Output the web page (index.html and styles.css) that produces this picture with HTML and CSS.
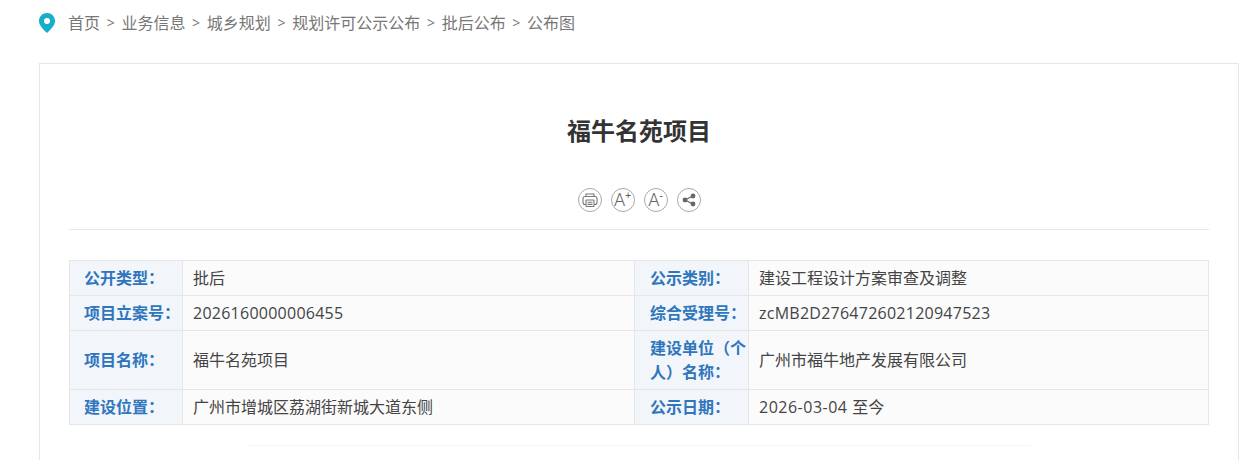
FILE: index.html
```html
<!DOCTYPE html>
<html lang="zh-CN">
<head>
<meta charset="utf-8">
<title>福牛名苑项目</title>
<link rel="stylesheet" href="styles.css">
</head>
<body>
<nav class="crumbs">
  <svg class="pin" width="16" height="20" viewBox="0 0 16 20"><path fill="#16aec9" fill-rule="evenodd" d="M8 0C3.6 0 0 3.5 0 7.900 0 12.600 4.700 16.800 8 20c3.300-3.200 8-7.400 8-12.100C16 3.500 12.400 0 8 0zm0 5a3 3 0 1 1 0 6 3 3 0 0 1 0-6z"/></svg>
  <a>首页</a><span class="sep">&gt;</span><a>业务信息</a><span class="sep">&gt;</span><a>城乡规划</a><span class="sep">&gt;</span><a>规划许可公示公布</a><span class="sep">&gt;</span><a>批后公布</a><span class="sep">&gt;</span><a>公布图</a>
</nav>
<main class="panel">
  <h1 class="title">福牛名苑项目</h1>
  <div class="tools">
    <span class="tool"><svg class="print" width="22" height="22" viewBox="0 0 22 22" fill="none" stroke="#777" stroke-width="1.100"><path d="M7 7.500V5h8v2.500"/><rect x="4" y="7.500" width="14" height="8" rx="2"/><rect x="7" y="11" width="8" height="6.500" rx="0.500" fill="#fff"/><path d="M8.500 13.200h5M8.500 15.400h5"/></svg></span>
    <span class="tool"><span class="glyph">A</span><span class="mark">+</span></span>
    <span class="tool"><span class="glyph">A</span><span class="mark">-</span></span>
    <span class="tool"><svg width="22" height="22" viewBox="0 0 22 22" fill="#666" stroke="#666" stroke-width="1.200"><path d="M15 7l-8 4 8 4" fill="none"/><circle cx="15" cy="7" r="1.800"/><circle cx="7" cy="11" r="1.800"/><circle cx="15" cy="15" r="1.800"/></svg></span>
  </div>
  <table class="info">
    <colgroup><col class="c-label-a"><col class="c-val-a"><col class="c-label-b"><col class="c-val-b"></colgroup>
    <tr class="row"><th>公开类型：</th><td>批后</td><th class="th-b">公示类别：</th><td>建设工程设计方案审查及调整</td></tr>
    <tr class="row"><th>项目立案号：</th><td><span class="num">2026160000006455</span></td><th class="th-b">综合受理号：</th><td><span class="num">zcMB2D276472602120947523</span></td></tr>
    <tr class="row row-tall"><th>项目名称：</th><td>福牛名苑项目</td><th class="th-b">建设单位（个人）名称：</th><td>广州市福牛地产发展有限公司</td></tr>
    <tr class="row"><th>建设位置：</th><td>广州市增城区荔湖街新城大道东侧</td><th class="th-b">公示日期：</th><td><span class="date">2026-03-04 </span>至今</td></tr>
  </table>
  <div class="fade-line"></div>
</main>
</body>
</html>
```
FILE: styles.css
```css
* { box-sizing: border-box; }
html, body { margin: 0; height: 460px; overflow: hidden; background: #fff; }
body {
  font-family: "Open Sans", "Liberation Sans", "Noto Sans CJK SC", sans-serif;
  color: #333;
}
.crumbs {
  display: flex;
  align-items: center;
  height: 44px;
  padding-left: 39px;
  font-size: 16px;
  color: #777;
}
.pin { margin: 1px 13px 0 0; }
.sep { margin: 0 6.700px; font-size: 14px; }
.panel {
  margin: 19px 0 0 39px;
  width: 1200px;
  height: 397px;
  padding: 0 29px;
  border: 1px solid #e6e6e6;
  border-bottom: 0;
  background: #fff;
}
.title {
  margin: 0;
  padding-top: 49px;
  height: 107px;
  line-height: 36px;
  text-align: center;
  font-size: 24px;
  font-weight: 700;
  color: #333;
}
.tools {
  display: flex;
  justify-content: center;
  gap: 9px;
  height: 59px;
  padding-top: 17px;
  border-bottom: 1px solid #e8e8e8;
}
.tool {
  display: flex;
  align-items: center;
  justify-content: center;
  width: 24px;
  height: 24px;
  border: 1px solid #aaa;
  border-radius: 50%;
  color: #777;
}
.tool svg { flex: none; }
.glyph { font-family: Roboto, "Liberation Sans", sans-serif; font-weight: 300; font-size: 18px; line-height: 1; color: #666; }
.mark { align-self: flex-start; margin-top: 2px; font-size: 10px; line-height: 1; font-family: "Liberation Sans", sans-serif; color: #555; }
.info {
  margin-top: 30px;
  width: 1139px;
  border-collapse: collapse;
  table-layout: fixed;
  font-size: 16px;
}
.c-label-a { width: 113px; }
.c-val-a { width: 452px; }
.c-label-b { width: 114px; }
.c-val-b { width: 460px; }
.row { height: 35px; }
.row-tall { height: 59px; }
.info th, .info td { border: 1px solid #e6e6e6; padding: 0; line-height: 24px; }
.info th {
  background: #f2f5fa;
  color: #2f76bd;
  font-weight: 700;
  text-align: left;
  padding: 0 0 0 14px;
}
.info .th-b { padding-left: 15px; }
.info td { background: #fbfbfc; color: #444; padding-left: 10px; }
.num { letter-spacing: 0.250px; }
.date { letter-spacing: 0.500px; }
.fade-line {
  margin: 20px 0 0 179px;
  width: 782px;
  height: 1px;
  background: #f5f5f5;
}
```
